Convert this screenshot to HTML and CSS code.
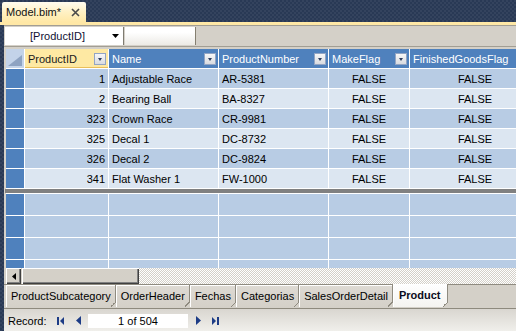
FILE: index.html
```html
<!DOCTYPE html>
<html lang="en">
<head>
    <meta charset="UTF-8">
    <title>Model.bim</title>
    <link rel="stylesheet" href="styles.css">
</head>
<body>
    <div class="doc-tabs">
        <div class="doc-tab">
            <span>Model.bim*</span>
            <svg class="close" width="9" height="9" viewBox="0 0 9 9"><path d="M1 1 L8 8 M8 1 L1 8" stroke="#4a4a4a" stroke-width="1.6"/></svg>
        </div>
    </div>
    <div class="doc-accent"></div>

    <div class="workspace">
        <!-- column picker + formula box -->
        <div class="formula-bar">
            <div class="column-picker">
                <span>[ProductID]</span>
                <svg width="7" height="4" viewBox="0 0 7 4"><path d="M0 0 H7 L3.5 4 Z" fill="#000"/></svg>
            </div>
            <div class="formula-box"></div>
        </div>

        <div class="grid">
            <div class="corner"><svg width="14" height="11" viewBox="0 0 14 11"><path d="M0 11 L14 0 V11 Z" fill="#8ea3c2"/></svg></div>
            <div class="hcell selected"><span>ProductID</span><i class="filter-btn"></i></div>
            <div class="hcell"><span>Name</span><i class="filter-btn"></i></div>
            <div class="hcell"><span>ProductNumber</span><i class="filter-btn"></i></div>
            <div class="hcell"><span>MakeFlag</span><i class="filter-btn"></i></div>
            <div class="hcell"><span>FinishedGoodsFlag</span></div>

            <div class="rowhead"></div>
            <div class="cell num">1</div><div class="cell">Adjustable Race</div><div class="cell">AR-5381</div><div class="cell flag">FALSE</div><div class="cell flag">FALSE</div>

            <div class="rowhead"></div>
            <div class="cell alt num">2</div><div class="cell alt">Bearing Ball</div><div class="cell alt">BA-8327</div><div class="cell alt flag">FALSE</div><div class="cell alt flag">FALSE</div>

            <div class="rowhead"></div>
            <div class="cell num">323</div><div class="cell">Crown Race</div><div class="cell">CR-9981</div><div class="cell flag">FALSE</div><div class="cell flag">FALSE</div>

            <div class="rowhead"></div>
            <div class="cell alt num">325</div><div class="cell alt">Decal 1</div><div class="cell alt">DC-8732</div><div class="cell alt flag">FALSE</div><div class="cell alt flag">FALSE</div>

            <div class="rowhead"></div>
            <div class="cell num">326</div><div class="cell">Decal 2</div><div class="cell">DC-9824</div><div class="cell flag">FALSE</div><div class="cell flag">FALSE</div>

            <div class="rowhead"></div>
            <div class="cell alt num">341</div><div class="cell alt">Flat Washer 1</div><div class="cell alt">FW-1000</div><div class="cell alt flag">FALSE</div><div class="cell alt flag">FALSE</div>
        </div>

        <div class="splitter"></div>

        <!-- measure grid (empty) -->
        <div class="measure-wrap">
            <div class="grid measure">
                <div class="rowhead"></div><div class="cell"></div><div class="cell"></div><div class="cell"></div><div class="cell"></div><div class="cell"></div>
                <div class="rowhead"></div><div class="cell"></div><div class="cell"></div><div class="cell"></div><div class="cell"></div><div class="cell"></div>
                <div class="rowhead"></div><div class="cell"></div><div class="cell"></div><div class="cell"></div><div class="cell"></div><div class="cell"></div>
                <div class="rowhead"></div><div class="cell"></div><div class="cell"></div><div class="cell"></div><div class="cell"></div><div class="cell"></div>
            </div>
        </div>

        <div class="hscroll">
            <div class="scroll-btn"><svg width="4" height="7" viewBox="0 0 4 7"><path d="M4 0 V7 L0 3.5 Z" fill="#000"/></svg></div>
            <div class="scroll-thumb"></div>
            <div class="scroll-track"></div>
        </div>

        <div class="sheet-tabs">
            <div class="sheet-tab">ProductSubcategory</div>
            <div class="sheet-tab">OrderHeader</div>
            <div class="sheet-tab">Fechas</div>
            <div class="sheet-tab">Categorias</div>
            <div class="sheet-tab">SalesOrderDetail</div>
            <div class="sheet-tab active">Product</div>
        </div>

        <div class="record-bar">
            <span class="record-label">Record:</span>
            <svg class="nav first" width="7" height="8" viewBox="0 0 7 8"><path d="M0 0 H2 V8 H0 Z M7 0 V8 L3 4 Z" fill="#1d3c86"/></svg>
            <svg class="nav prev" width="5" height="9" viewBox="0 0 5 9"><path d="M5 0 V9 L0 4.5 Z" fill="#1d3c86"/></svg>
            <div class="record-box">1 of 504</div>
            <svg class="nav next" width="5" height="9" viewBox="0 0 5 9"><path d="M0 0 V9 L5 4.5 Z" fill="#1d3c86"/></svg>
            <svg class="nav last" width="7" height="8" viewBox="0 0 7 8"><path d="M0 0 V8 L4 4 Z M5 0 H7 V8 H5 Z" fill="#1d3c86"/></svg>
        </div>
    </div>
</body>
</html>
```

FILE: styles.css
```css
html, body {
    margin: 0;
    padding: 0;
}
body {
    width: 516px;
    height: 331px;
    overflow: hidden;
    font-family: "Liberation Sans", Arial, sans-serif;
    font-size: 11px;
    color: #000;
    background-color: #293955;
    /* fine diamond texture of the IDE background */
    background-image:
        linear-gradient(45deg, rgba(255, 255, 255, 0.05) 25%, transparent 25%, transparent 75%, rgba(255, 255, 255, 0.05) 75%),
        linear-gradient(45deg, rgba(255, 255, 255, 0.05) 25%, transparent 25%, transparent 75%, rgba(255, 255, 255, 0.05) 75%);
    background-size: 4px 4px;
    background-position: 0 0, 2px 2px;
}

/* document tab strip */
.doc-tabs {
    height: 22px;
    padding-left: 2px;
    display: flex;
    align-items: flex-end;
}
.doc-tab {
    width: 84px;
    height: 20px;
    box-sizing: border-box;
    padding: 0 6px 0 4px;
    display: flex;
    align-items: center;
    justify-content: space-between;
    background: linear-gradient(#fffcf0, #fff1c4 50%, #ffe8a6);
    border-radius: 2px 2px 0 0;
    color: #111;
}
.doc-tab .close {
    margin-top: 1px;
}
.doc-accent {
    height: 3px;
    background: #ffe8a6;
}

.workspace {
    margin-left: 4px;
    height: 306px;
    overflow: hidden;
    background: #d4d0c8;
}

/* column picker row */
.formula-bar {
    height: 19px;
    border-top: 1px solid #a29e94;
    border-bottom: 1px solid #a29e94;
    margin-bottom: 2px;
    padding: 1px 0 0 1px;
    display: flex;
    align-items: flex-start;
}
.column-picker {
    width: 119px;
    height: 18px;
    background: #fff;
    border-right: 1px solid #7f7c72;
    display: flex;
    align-items: center;
    justify-content: space-between;
    padding: 0 4px 0 25px;
    box-sizing: border-box;
    color: #111133;
}
.formula-box {
    width: 71px;
    height: 18px;
    box-sizing: border-box;
    margin-left: 1px;
    background: linear-gradient(#ffffff 30%, #eceae5);
    border-right: 1px solid #857f70;
}

/* data grid */
.grid {
    display: grid;
    grid-template-columns: 18px 83px 109px 109px 80px 130px;
    grid-auto-rows: 19px;
    gap: 1px;
    width: max-content;
    margin-left: 2px;
    background: #fff;
    border-bottom: 1px solid #fff;
}
.corner {
    background: #c3d3e9;
    display: flex;
    align-items: flex-end;
    justify-content: flex-end;
    padding: 0 2px 2px 0;
}
.hcell {
    background: #4f81bd;
    color: #fff;
    display: flex;
    align-items: center;
    justify-content: space-between;
    padding: 0 2px 0 3px;
    white-space: nowrap;
    overflow: hidden;
}
.hcell.selected {
    background: #fee9a3;
    color: #1a1a1a;
    box-shadow: inset 0 -1px #e9bf5a;
}
.filter-btn {
    width: 12px;
    height: 12px;
    box-sizing: border-box;
    border: 1px solid #93a5c4;
    background: linear-gradient(#f7f7f7, #d9dbe0);
    position: relative;
    flex: none;
}
.filter-btn::after {
    content: "";
    position: absolute;
    left: 3px;
    top: 4px;
    border-left: 2.5px solid transparent;
    border-right: 2.5px solid transparent;
    border-top: 3px solid #2d3d5e;
}
.rowhead {
    background: #4f81bd;
}
.cell {
    background: #b8cce4;
    padding: 0 3px;
    line-height: 20px;
    white-space: nowrap;
    overflow: hidden;
}
.cell.alt {
    background: #dce6f1;
}
.num {
    text-align: right;
}
.flag {
    text-align: center;
}

.splitter {
    height: 4px;
    margin-left: 1px;
    background: #808080;
}
.measure-wrap {
    height: 75px;
    overflow: hidden;
}
.grid.measure {
    grid-auto-rows: 21px;
    border-top: 1px solid #fff;
    border-bottom: none;
}

/* horizontal scrollbar */
.hscroll {
    height: 16px;
    margin-left: 2px;
    display: flex;
}
.scroll-btn, .scroll-thumb {
    background: #d4d0c8;
    box-sizing: border-box;
    box-shadow: inset 1px 1px #fff, inset -1px -1px #404040, inset -2px -2px #808080;
}
.scroll-btn {
    width: 15px;
    display: flex;
    align-items: center;
    justify-content: center;
}
.scroll-thumb {
    width: 117px;
    margin-left: 1px;
}
.scroll-track {
    flex: 1;
    background: repeating-conic-gradient(#ffffff 0 25%, #d4d0c8 0 50%);
    background-size: 2px 2px;
}

/* sheet tabs */
.sheet-tabs {
    height: 24px;
    padding-left: 2px;
    display: flex;
    border-top: 1px solid #8f8b80;
    box-sizing: border-box;
}
.sheet-tab {
    position: relative;
    height: 22px;
    line-height: 22px;
    padding: 0 4px 0 4px;
    background: linear-gradient(#dedad3, #d4d0c8);
    border-left: 1px solid #fff;
    border-right: 1px solid #8f8b80;
    box-shadow: inset 0 1px #fff;
    white-space: nowrap;
}
/* folded bottom-right corner */
.sheet-tab::after {
    content: "";
    position: absolute;
    right: -1px;
    bottom: 0;
    width: 5px;
    height: 5px;
    background: linear-gradient(to top left, #d4d0c8 45%, #8f8b80 45%, #8f8b80 60%, transparent 60%);
}
.sheet-tab.active {
    font-weight: bold;
    background: linear-gradient(#ffffff, #f4f3f0);
    margin-top: -1px;
    height: 23px;
    line-height: 23px;
    padding: 0 7px 0 5px;
    color: #0b0b20;
}

/* record navigation */
.record-bar {
    height: 23px;
    border-top: 1px solid #8e8a7e;
    background: linear-gradient(#d9d6d0, #f1f0ec);
    display: flex;
    align-items: center;
    padding-left: 4px;
}
.record-label {
    width: 49px;
}
.nav.prev {
    margin-left: 12px;
}
.record-box {
    width: 100px;
    height: 14px;
    line-height: 14px;
    margin-left: 7px;
    background: #fff;
    text-align: center;
}
.nav.next {
    margin-left: 8px;
}
.nav.last {
    margin-left: 11px;
}
```
